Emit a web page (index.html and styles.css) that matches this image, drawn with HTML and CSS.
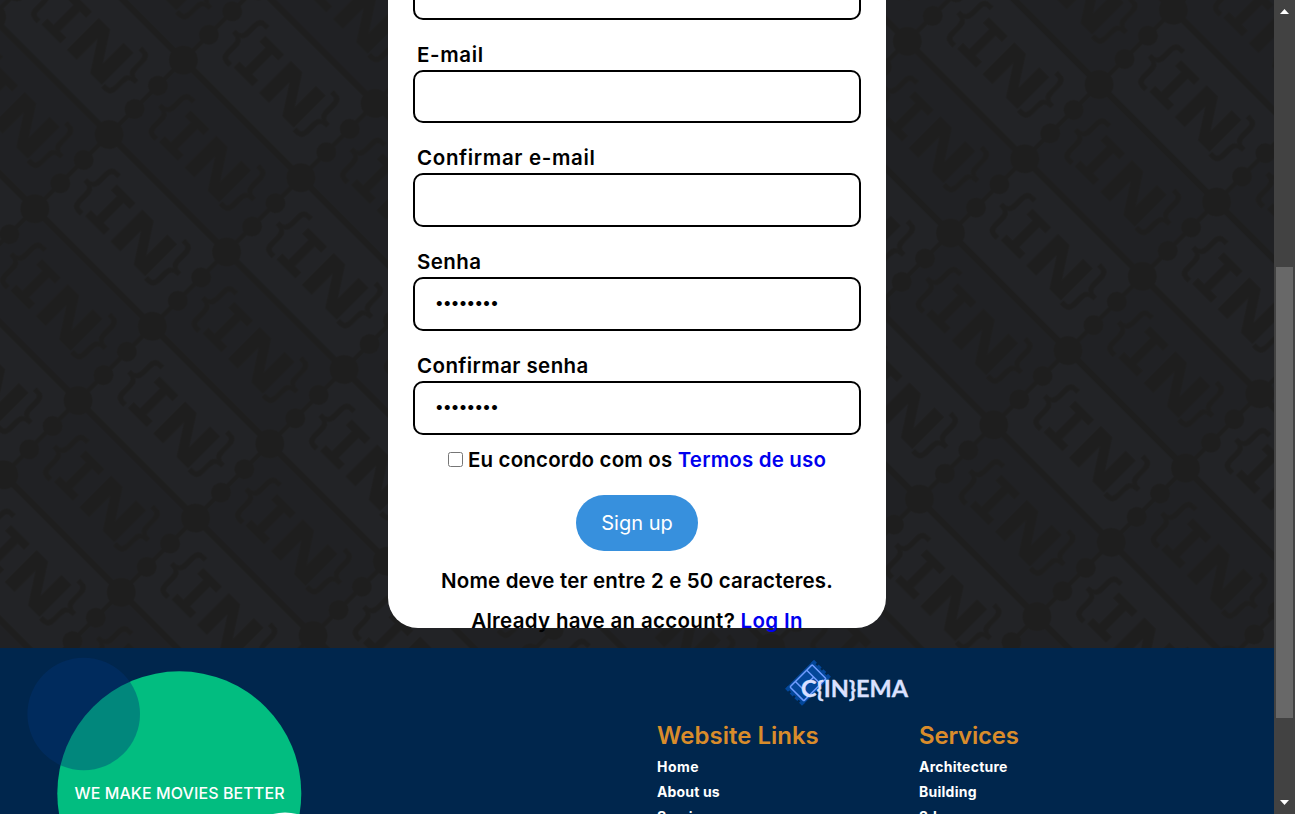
FILE: index.html
```html
<!DOCTYPE html>
<html lang="pt-BR">
<head>
<meta charset="utf-8">
<title>C{IN}EMA</title>
<link rel="stylesheet" href="styles.css">
</head>
<body>
<div class="page">
  <div class="content">
    <main class="hero">
      <svg class="hero-pattern" width="1274" height="648" aria-hidden="true">
        <defs>
          <g id="ticket">
            <path d="M0 0H166.17" stroke="#1e1e1e" stroke-width="6.5"/>
            <path d="M0 0V-105.05" stroke="#1e1e1e" stroke-width="4.5"/>
            <circle r="14.5"/>
            <circle cy="-36" r="10"/>
            <circle cy="-69" r="10"/>
            <text class="mark brace" x="10" y="-38" textLength="32" lengthAdjust="spacingAndGlyphs">{</text>
            <text class="mark slab" x="36" y="-30.4" textLength="36" lengthAdjust="spacingAndGlyphs">I</text>
            <text class="mark wide" x="70" y="-30.4" textLength="62" lengthAdjust="spacingAndGlyphs">N</text>
            <text class="mark brace" x="122" y="-38" textLength="32" lengthAdjust="spacingAndGlyphs">}</text>
          </g>
          <pattern id="tickets" width="332.34" height="210.1" patternUnits="userSpaceOnUse" patternTransform="translate(183.4 60.2) rotate(45)">
            <rect width="332.34" height="210.1" fill="#202124"/>
            <rect x="166.17" width="166.17" height="105.05" fill="#222326"/>
            <rect y="105.05" width="166.17" height="105.05" fill="#222326"/>
            <g fill="#1e1e1e">
              <use href="#ticket"/>
              <use href="#ticket" x="166.17"/>
              <use href="#ticket" x="332.34"/>
              <use href="#ticket" y="105.05"/>
              <use href="#ticket" x="166.17" y="105.05"/>
              <use href="#ticket" x="332.34" y="105.05"/>
              <use href="#ticket" y="210.1"/>
              <use href="#ticket" x="166.17" y="210.1"/>
              <use href="#ticket" x="332.34" y="210.1"/>
            </g>
          </pattern>
        </defs>
        <rect width="1274" height="648" fill="url(#tickets)"/>
      </svg>
      <form class="card">
        <input class="field-input" type="text" aria-label="Nome">
        <label class="field"><span class="field-label l-email">E-mail</span><input class="field-input" type="text"></label>
        <label class="field"><span class="field-label l-email">Confirmar e-mail</span><input class="field-input" type="text"></label>
        <label class="field"><span class="field-label l-pass">Senha</span><span class="field-input dots">••••••••</span></label>
        <label class="field"><span class="field-label l-pass">Confirmar senha</span><span class="field-input dots">••••••••</span></label>
        <label class="terms"><input class="check" type="checkbox"><span>Eu concordo com os <a href="#">Termos de uso</a></span></label>
        <button class="signup" type="button">Sign up</button>
        <p class="message">Nome deve ter entre 2 e 50 caracteres.</p>
        <p class="login">Already have an account? <a href="#">Log In</a></p>
      </form>
    </main>
    <footer class="footer">
      <svg class="badge" width="320" height="166">
        <circle cx="179.3" cy="145.3" r="122" fill="#02bd80"/>
        <circle cx="83.7" cy="66" r="56.3" fill="#003376" fill-opacity=".39"/>
        <circle cx="285" cy="213" r="48.5" fill="#fff"/>
        <text class="slogan" x="74.500" y="151" textLength="210">WE MAKE MOVIES BETTER</text>
      </svg>
      <div class="links">
        <svg class="logo" width="130" height="50" viewBox="783 657 130 50">
          <g transform="translate(808 682.8) rotate(-45)">
            <rect x="-18.5" y="-12" width="37" height="24" fill="#03479a"/>
            <path d="M-18.500-12V12M18.500-12V12" stroke="#03479a" stroke-width="4" stroke-dasharray="4.2 2.4"/>
            <rect x="-15.7" y="-9.8" width="31.4" height="19.6" rx="1" fill="none" stroke="#6f9cff" stroke-width="1.5"/>
            <path d="M-8-9.800V9.800M8-9.800V9.800M-8 0H8" fill="none" stroke="#6f9cff" stroke-width="1.5"/>
          </g>
          <text class="logo-text" x="801" y="696.5" textLength="107" lengthAdjust="spacingAndGlyphs">C{IN}EMA</text>
        </svg>
        <div class="columns">
          <nav class="column">
            <h2 class="title">Website Links</h2>
            <a class="link k-home">Home</a><a class="link k-about">About us</a><a class="link">Services</a>
          </nav>
          <nav class="column">
            <h2 class="title t-services">Services</h2>
            <a class="link k-arch">Architecture</a><a class="link k-arch">Building</a><a class="link">3d</a>
          </nav>
        </div>
      </div>
    </footer>
  </div>
  <div class="scrollbar">
    <svg width="21" height="20"><path d="M6 14L10.500 9L15 14Z" fill="#fff"/></svg>
    <div class="thumb"></div>
    <svg class="down" width="21" height="20"><path d="M6 6L10.500 11L15 6Z" fill="#fff"/></svg>
  </div>
</div>
</body>
</html>
```
FILE: styles.css
```css
* { box-sizing: border-box; }
body { margin: 0; height: 814px; overflow: hidden; font-family: Inter, "Open Sans", sans-serif; color: #000; }
a { color: #0000ee; text-decoration: none; }
.page { display: flex; height: 814px; }
.content { width: 1274px; height: 814px; overflow: hidden; }
.hero { display: grid; grid-template: 648px / 1274px; justify-items: center; overflow: hidden; }
.hero-pattern { grid-area: 1 / 1; display: block; }
.mark { font-weight: 700; stroke: #1e1e1e; stroke-width: 0.8; }
.slab { font-family: "DejaVu Sans Mono", monospace; font-size: 60px; }
.wide { font-family: "DejaVu Sans", sans-serif; font-size: 60px; }
.brace { font-family: "DejaVu Sans Mono", monospace; font-size: 62px; font-weight: 400; }
.card { grid-area: 1 / 1; z-index: 1; display: flex; flex-direction: column; align-items: center; width: 498px; height: 663px; margin-top: -35px; padding: 0.8px 25px 0; background: #fff; border-radius: 0 0 30px 30px; font-size: 20.5px; font-weight: 600; line-height: 30px; }
.field { display: block; width: 448px; height: 103.8px; flex: none; }
.field-label { display: block; height: 50px; padding: 20px 0 0 4px; }
.l-email { letter-spacing: 0.65px; }
.l-pass { letter-spacing: 0.4px; }
.field-input { display: block; flex: none; width: 448px; height: 53.8px; border: 2px solid #000; border-radius: 10px; background: #fff; }
.dots { padding: 8px 20px; font-size: 16px; font-weight: 500; letter-spacing: -0.65px; }
.terms { display: flex; align-items: center; gap: 5px; height: 30px; margin-top: 10px; white-space: nowrap; flex: none; letter-spacing: 0.17px; }
.check { width: 15px; height: 15px; margin: 0; }
.signup { flex: none; width: 122px; height: 56px; margin-top: 20px; padding: 0; border: 0; border-radius: 28px; background: #3790dd; color: #fff; font: 400 20px/56px Inter, sans-serif; }
.message, .login { margin: 15px 0 0; white-space: nowrap; letter-spacing: 0.16px; }
.login { margin-top: 10px; letter-spacing: 0.32px; }
.footer { display: flex; height: 166px; background: #00264d; overflow: hidden; }
.badge { flex: none; margin-right: 337px; }
.slogan { font: 500 16px Inter, sans-serif; fill: #fff; }
.links { width: 600px; padding-top: 9px; }
.logo { display: block; margin-left: 126px; }
.logo-text { font: 700 22px Lato, sans-serif; fill: #dbe1ff; stroke: #dbe1ff; stroke-width: 0.3px; }
.columns { display: grid; grid-template-columns: 262px 262px; margin-top: 11px; }
.column { display: flex; flex-direction: column; }
.title { margin: 0; font-size: 24px; font-weight: 600; line-height: 36px; color: #d98c2b; }
.t-services { letter-spacing: -0.2px; }
.link { font-size: 14px; font-weight: 700; line-height: 25px; color: #fff; }
.k-home { letter-spacing: 0.5px; }
.k-about { letter-spacing: 0.15px; }
.k-arch { letter-spacing: 0.25px; }
.scrollbar { display: flex; flex-direction: column; width: 21px; height: 814px; background: #424242; }
.thumb { width: 17px; height: 451px; margin: 247px 0 0 2px; background: #686868; }
.down { margin-top: auto; }
```
